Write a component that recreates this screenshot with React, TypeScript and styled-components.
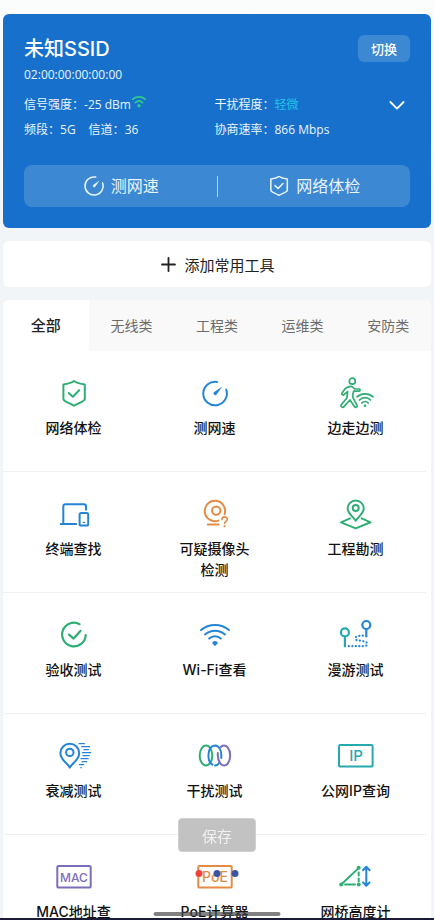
import React, { useState } from "react";
import styled, { createGlobalStyle } from "styled-components";

const GREEN = "#2fae74";
const BLUE = "#2484d8";
const ORANGE = "#e58b45";
const TEAL = "#27aaae";
const PURPLE = "#7c6dbb";
const STRONG_FONT = `Inter, "Noto Sans CJK SC", sans-serif`;

const GlobalStyle = createGlobalStyle`
  *, *::before, *::after { box-sizing: border-box; }
  body {
    margin: 0;
    background: #f2f5f8;
    color: #111;
    font-family: "Open Sans", "Noto Sans CJK SC", sans-serif;
  }
  button { font: inherit; color: inherit; border: 0; padding: 0; margin: 0; background: none; cursor: pointer; }
  h1, p, dl, dt, dd, ul { margin: 0; padding: 0; }
  svg { display: block; flex: none; }
`;

const Screen = styled.div`
  height: 100vh;
  overflow: hidden;
  background: linear-gradient(#fbfcfc, #f2f5f8 240px);
`;

const Content = styled.main`
  height: 100%;
  overflow-y: auto;
  scrollbar-width: none;
  display: flex;
  flex-direction: column;
  gap: 13px;
  padding: 14px 3px 0;
`;

const NetworkCard = styled.section`
  flex: none;
  padding: 21px;
  border-radius: 6px;
  background: #1870cd;
  color: #e9f5fb;
`;

const CardHeader = styled.header`
  display: flex;
  justify-content: space-between;
  align-items: flex-start;
`;

const NetworkName = styled.h1`
  font-family: ${STRONG_FONT};
  font-size: 20px;
  line-height: 28px;
  font-weight: 500;
  color: #fff;
`;

const Address = styled.p`
  font-size: 12px;
  line-height: 24px;
`;

const SwitchButton = styled.button`
  width: 52px;
  height: 27px;
  border-radius: 6px;
  background: #3c88d3;
  color: #fff;
  font-size: 13px;
  font-weight: 500;
`;

const StatsRow = styled.div`
  display: grid;
  grid-template-columns: 190fr 195fr;
  align-items: start;
  margin-top: 5px;
  position: relative;
`;

const Stats = styled.dl`
  display: flex;
  flex-wrap: wrap;
  column-gap: 13px;
  font-size: 12px;
  line-height: 25px;
`;

const Stat = styled.div<{ $full?: boolean }>`
  display: flex;
  flex-basis: ${(p) => (p.$full ? "100%" : "auto")};
`;

const StatValue = styled.dd<{ $accent?: boolean }>`
  display: flex;
  gap: 1px;
  color: ${(p) => (p.$accent ? "#1fc3ea" : "inherit")};
`;

const ExpandButton = styled.button`
  position: absolute;
  right: 5px;
  top: 5px;
`;

const QuickBar = styled.div`
  display: flex;
  align-items: center;
  height: 42px;
  margin-top: 23px;
  border-radius: 8px;
  background: #3c88d3;
`;

const QuickAction = styled.button`
  flex: 1;
  display: flex;
  align-items: center;
  justify-content: center;
  gap: 7px;
  height: 100%;
  padding-left: 2px;
  font-size: 16px;
  line-height: 24px;
`;

const QuickDivider = styled.span`
  width: 1px;
  height: 21px;
  background: #b5d8ec;
`;

const AddButton = styled.button`
  flex: none;
  display: flex;
  align-items: center;
  justify-content: center;
  gap: 8px;
  height: 46px;
  padding-left: 2px;
  border-radius: 6px;
  background: #fff;
  color: #222;
  font-size: 15px;
`;

const ToolPanel = styled.section`
  flex: none;
  border-radius: 6px 6px 0 0;
  background: #fff;
  overflow: hidden;
`;

const TabList = styled.div`
  display: grid;
  grid-template-columns: repeat(5, 1fr);
  height: 51px;
  background: #f9f9f9;
`;

const Tab = styled.button<{ $active: boolean }>`
  padding-bottom: 2px;
  background: ${(p) => (p.$active ? "#fff" : "transparent")};
  color: ${(p) => (p.$active ? "#222" : "#6c6c6c")};
  font-size: ${(p) => (p.$active ? 15 : 14)}px;
  font-weight: ${(p) => (p.$active ? 500 : 400)};
`;

const ToolRow = styled.div`
  display: grid;
  grid-template-columns: repeat(3, 1fr);
  height: 121px;
  margin-right: 5px;
  border-bottom: 1px solid #eff1f3;
`;

const Tool = styled.button`
  display: flex;
  flex-direction: column;
  align-items: center;
  gap: 8px;
  padding-top: 26px;
`;

const ToolLabel = styled.span`
  max-width: 80px;
  font-family: ${STRONG_FONT};
  font-size: 14px;
  line-height: 21px;
  font-weight: 500;
  text-align: center;
`;

const SaveButton = styled.button`
  position: fixed;
  left: 50%;
  bottom: 68px;
  transform: translateX(-50%);
  width: 78px;
  height: 34px;
  border: 1px solid #d0d0d0;
  border-radius: 4px;
  background: rgba(190, 190, 190, 0.94);
  color: #f1f1f1;
  font-size: 15px;
`;

const LoadingDots = styled.div`
  position: fixed;
  left: 50%;
  bottom: 43px;
  transform: translateX(-50%);
  display: flex;
  gap: 11px;
`;

const Dot = styled.span<{ $color: string }>`
  width: 7px;
  height: 7px;
  border-radius: 50%;
  background: ${(p) => p.$color};
`;

const HomeIndicator = styled.div`
  position: fixed;
  left: 50%;
  bottom: 4px;
  transform: translateX(-50%);
  width: 127px;
  height: 4px;
  border-radius: 2px;
  background: rgba(70, 70, 70, 0.68);
`;

const BottomEdge = styled.div`
  position: fixed;
  left: 0;
  right: 0;
  bottom: 0;
  height: 2px;
  background: #1b1b35;
`;

const IconText = styled.text`
  font-family: ${STRONG_FONT};
  text-anchor: middle;
  stroke: none;
`;

type IconProps = { color?: string; children: React.ReactNode; width?: number };

const Icon = ({ color = "currentColor", children, width = 2 }: IconProps) => (
  <svg width="40" height="32" viewBox="0 0 40 32" fill="none" stroke={color} strokeWidth={width} strokeLinecap="round" strokeLinejoin="round" aria-hidden="true">
    {children}
  </svg>
);

const shield = (
  <>
    <path d="M20 4C17 6.2 13.2 7 9.4 7.4V22C9.4 24.6 16.5 26.2 20 28.8C23.5 26.2 30.8 24.6 30.8 22V7.4C26.8 7 23 6.2 20 4Z" />
    <path d="M14.8 16L18.8 19.8L25.2 13.2" />
  </>
);

const gauge = (
  <>
    <path d="M22.2 4.9A11.8 11.8 0 1 0 31.2 12.6" />
    <path d="M27.2 9.4L21.6 17.4A1.7 1.7 0 0 1 18.9 15.2Z" fill="currentColor" stroke="none" />
  </>
);

const smallSvg = { width: 20, height: 20, viewBox: "7 3.5 26 26", fill: "none", stroke: "currentColor", strokeLinecap: "round", strokeLinejoin: "round" } as const;

const tools: { label: string; icon: React.ReactNode }[][] = [
  [
    { label: "网络体检", icon: <Icon color={GREEN}>{shield}</Icon> },
    {
      label: "测网速",
      icon: (
        <Icon color={BLUE}>
          <g color={BLUE}>{gauge}</g>
        </Icon>
      ),
    },
    {
      label: "边走边测",
      icon: (
        <Icon color={GREEN} width={1.7}>
          <circle cx="16.3" cy="4.2" r="3" />
          <path d="M14.8 9.3C12.5 9.5 10.5 10.4 9 11.8L5.8 16.5C5.5 18 7.4 18.5 8.2 17.4L11.6 14.6L11 20.7L5 28C4.4 29.8 6.8 31 8 29.7L14 23L18.7 29.9C20 31 21.9 29.8 21 28.2L17.2 21.2L16.6 18.6L17.6 14.2H23C24.5 14.1 24.5 12.1 23 12H18.6L16.6 10C16.1 9.5 15.5 9.3 14.8 9.3Z" />
          <path d="M21 19.8C25.2 15.8 32.8 15.8 37 19.8M23.4 23C26.6 19.8 31.4 19.8 34.6 23M25.8 26C27.6 24 30.4 24 32.2 26" />
          <circle cx="29" cy="28.8" r="1.3" fill={GREEN} stroke="none" />
        </Icon>
      ),
    },
  ],
  [
    {
      label: "终端查找",
      icon: (
        <Icon color={BLUE}>
          <path d="M32 11.8V8.5Q32 6.2 29.7 6.2H11.6Q9.3 6.2 9.3 8.5V26M6.8 26H22.2" />
          <rect x="25.6" y="15" width="8.6" height="12.6" rx="1.6" />
          <path d="M29.5 24.6H30.3" strokeWidth="1.5" />
        </Icon>
      ),
    },
    {
      label: "可疑摄像头检测",
      icon: (
        <Icon color={ORANGE}>
          <path d="M29.6 16.2A10.2 10.2 0 1 0 23.4 22.6" />
          <circle cx="21.2" cy="12.6" r="4.2" />
          <path d="M12.8 26.6H23.6" />
          <path d="M27 21.4C27.2 17.9 32.6 18.1 32.3 21.4C32.1 23.4 29.6 23.3 29.6 25.2" strokeWidth="1.7" />
          <circle cx="29.6" cy="28.2" r="1.1" fill={ORANGE} stroke="none" />
        </Icon>
      ),
    },
    {
      label: "工程勘测",
      icon: (
        <Icon color={GREEN}>
          <path d="M19.7 22.6C17.2 19 11.6 15.2 11.6 10.6A8.1 8.1 0 0 1 27.8 10.6C27.8 15.2 22.2 19 19.7 22.6Z" />
          <circle cx="19.7" cy="10" r="3" />
          <path d="M14 20.4L5 24.3L19.7 30.4L34.6 24.3L25.6 20.4" />
        </Icon>
      ),
    },
  ],
  [
    {
      label: "验收测试",
      icon: (
        <Icon color={GREEN} width={2.2}>
          <path d="M25.6 5.2A11.8 11.8 0 1 0 31.7 16.2" />
          <path d="M15 15.6L19.6 19.6L26.6 11.8" />
        </Icon>
      ),
    },
    {
      label: "Wi-Fi查看",
      icon: (
        <Icon color={BLUE}>
          <path d="M6 11C14 4.2 26 4.2 34 11M10 15.4C16 10.4 24 10.4 30 15.4M14.2 19.6C17.6 16.4 22.4 16.4 25.8 19.6" />
          <path d="M18.3 23.8C19.4 22.9 20.6 22.9 21.7 23.8L20 25.8Z" fill={BLUE} />
        </Icon>
      ),
    },
    {
      label: "漫游测试",
      icon: (
        <Icon color={BLUE} width={2.2}>
          <g stroke={TEAL}>
            <circle cx="8.9" cy="13.4" r="4" />
            <path d="M8.9 17.6V27.4" />
          </g>
          <circle cx="30.3" cy="6" r="4" />
          <path d="M30.3 10.2V17.4" />
          <path d="M12.8 27.2H28C32.4 27 32 22.8 28.4 22.4L20.8 21.2C18.6 20 19.4 17.4 21.4 17.1L27.6 16.6" strokeDasharray="0.1 3.4" />
        </Icon>
      ),
    },
  ],
  [
    {
      label: "衰减测试",
      icon: (
        <Icon color={BLUE}>
          <path d="M15.8 27.6C13.2 22.8 6.4 19.8 6.4 13.2A9.4 9.4 0 0 1 25.2 13.2C25.2 19.8 18.4 22.8 15.8 27.6Z" />
          <circle cx="15.8" cy="12.4" r="3.7" />
          <path strokeWidth="1.2" d="M25 3.7H30.4M27.6 6.7H35.6M30 9.7H34.4M28.4 12.7H36.8M29 15.7H35.2M27 18.7H34.2M28 21.7H32.8M25.4 24.7H29.6M26.8 27.7H27.2" />
        </Icon>
      ),
    },
    {
      label: "干扰测试",
      icon: (
        <Icon>
          <ellipse cx="11" cy="15.5" rx="6.3" ry="10" stroke={GREEN} />
          <path d="M17.4 24.6C11.4 20.5 12.4 6 20 5.5C24.2 5.8 26.3 10.5 26.3 15.5V18M20 25.5C21.8 25.5 23.3 24.5 24.4 22.8" stroke={BLUE} />
          <path d="M25.4 7.4C27.6 4.8 30.6 4.8 32.7 7.4C36 11.5 36 19.5 32.7 23.6C30.6 26.2 27.6 26.2 25.4 23.6C23.2 20.8 22.5 17 22.8 13" stroke={PURPLE} />
        </Icon>
      ),
    },
    {
      label: "公网IP查询",
      icon: (
        <Icon color={TEAL}>
          <rect x="3" y="5" width="33.6" height="21.6" rx="1.2" />
          <IconText x="20" y="21.2" fontSize="15" fontWeight="500" fill={TEAL}>IP</IconText>
        </Icon>
      ),
    },
  ],
  [
    {
      label: "MAC地址查",
      icon: (
        <Icon color={PURPLE}>
          <rect x="3.3" y="5" width="33.4" height="21.6" rx="1.2" />
          <IconText x="20" y="20.6" fontSize="12" fontWeight="500" fill={PURPLE}>MAC</IconText>
        </Icon>
      ),
    },
    {
      label: "PoE计算器",
      icon: (
        <Icon color={ORANGE}>
          <rect x="3.3" y="5" width="33.4" height="21.6" rx="1.2" />
          <IconText x="20" y="20.8" fontSize="14" fontWeight="500" fill={ORANGE}>PoE</IconText>
        </Icon>
      ),
    },
    {
      label: "网桥高度计",
      icon: (
        <Icon color={GREEN}>
          <path d="M6 22.8L22 7.6M9 23.4H19" />
          <path d="M22.7 11.4V20.4" strokeDasharray="3 3" />
          <g fill={GREEN} stroke="none">
            <circle cx="5.2" cy="23.4" r="2" />
            <circle cx="22.7" cy="6.8" r="2" />
            <circle cx="22.7" cy="23.4" r="2" />
          </g>
          <path d="M30.3 6.2V24.4M27 9.2L30.3 5.8L33.6 9.2M27 21.4L30.3 24.8L33.6 21.4" stroke={BLUE} />
        </Icon>
      ),
    },
  ],
];

const tabs = ["全部", "无线类", "工程类", "运维类", "安防类"];

export default function App() {
  const [active, setActive] = useState(tabs[0]);

  return (
    <Screen>
      <GlobalStyle />
      <Content>
        <NetworkCard>
          <CardHeader>
            <div>
              <NetworkName>未知SSID</NetworkName>
              <Address>02:00:00:00:00:00</Address>
            </div>
            <SwitchButton type="button">切换</SwitchButton>
          </CardHeader>
          <StatsRow>
            <Stats>
              <Stat $full>
                <dt>信号强度：</dt>
                <StatValue>
                  -25 dBm
                  <svg width="14" height="20" viewBox="0 0 14 20" fill="none" stroke="#2fc98a" strokeWidth="1.8" strokeLinecap="round" aria-hidden="true">
                    <path d="M1 7.2C4.4 4.2 9.6 4.2 13 7.2M3.4 10.6C5.6 8.6 8.4 8.6 10.6 10.6" />
                    <circle cx="7" cy="13.8" r="1.7" fill="#2fc98a" stroke="none" />
                  </svg>
                </StatValue>
              </Stat>
              <Stat>
                <dt>频段：</dt>
                <StatValue>5G</StatValue>
              </Stat>
              <Stat>
                <dt>信道：</dt>
                <StatValue>36</StatValue>
              </Stat>
            </Stats>
            <Stats>
              <Stat $full>
                <dt>干扰程度：</dt>
                <StatValue $accent>轻微</StatValue>
              </Stat>
              <Stat $full>
                <dt>协商速率：</dt>
                <StatValue>866 Mbps</StatValue>
              </Stat>
            </Stats>
            <ExpandButton type="button" aria-label="展开">
              <svg width="16" height="16" viewBox="0 0 16 16" fill="none" stroke="#fff" strokeWidth="1.8" strokeLinecap="round" strokeLinejoin="round">
                <path d="M1.4 5L8 11.6L14.6 5" />
              </svg>
            </ExpandButton>
          </StatsRow>
          <QuickBar>
            <QuickAction type="button">
              <svg {...smallSvg} strokeWidth="2" aria-hidden="true">{gauge}</svg>
              测网速
            </QuickAction>
            <QuickDivider />
            <QuickAction type="button">
              <svg {...smallSvg} strokeWidth="2" aria-hidden="true">{shield}</svg>
              网络体检
            </QuickAction>
          </QuickBar>
        </NetworkCard>

        <AddButton type="button">
          <svg width="15" height="15" viewBox="0 0 15 15" fill="none" stroke="#222" strokeWidth="1.8" strokeLinecap="round" aria-hidden="true">
            <path d="M7.5 1V14M1 7.5H14" />
          </svg>
          添加常用工具
        </AddButton>

        <ToolPanel>
          <TabList role="tablist">
            {tabs.map((tab) => (
              <Tab key={tab} type="button" role="tab" aria-selected={tab === active} $active={tab === active} onClick={() => setActive(tab)}>
                {tab}
              </Tab>
            ))}
          </TabList>
          {tools.map((row) => (
            <ToolRow key={row[0].label}>
              {row.map((tool) => (
                <Tool key={tool.label} type="button">
                  {tool.icon}
                  <ToolLabel>{tool.label}</ToolLabel>
                </Tool>
              ))}
            </ToolRow>
          ))}
        </ToolPanel>
      </Content>

      <SaveButton type="button">保存</SaveButton>
      <LoadingDots aria-hidden="true">
        <Dot $color="#f0403f" />
        <Dot $color="#3a55a4" />
        <Dot $color="#3a55a4" />
      </LoadingDots>
      <HomeIndicator />
      <BottomEdge />
    </Screen>
  );
}
